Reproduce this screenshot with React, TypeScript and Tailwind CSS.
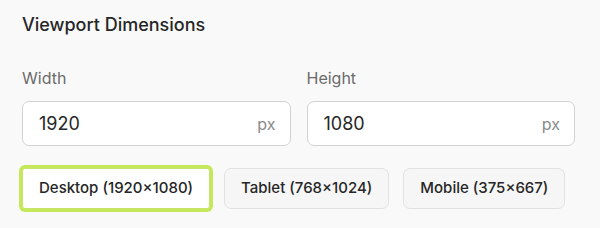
import React from "react";

export default function App() {
  const presets = [
    { label: "Desktop (1920×1080)", active: true },
    { label: "Tablet (768×1024)", active: false },
    { label: "Mobile (375×667)", active: false },
  ];
  return (
    <div
      className="w-[600px] h-[228px] bg-[#f9f9f9] pl-[22px] pr-[25px] pt-[11px]"
      style={{ fontFamily: "Inter, 'Noto Sans', sans-serif" }}
    >
      <h2 className="text-[18px] leading-[28px] font-medium text-[#262626]">Viewport Dimensions</h2>
      <div className="mt-[27px] grid grid-cols-2 gap-[16px]">
        {[
          { label: "Width", value: "1920" },
          { label: "Height", value: "1080" },
        ].map((f) => (
          <div key={f.label} className="flex flex-col">
            <span className="text-[16px] leading-[24px] text-[#6b6b6b]">{f.label}</span>
            <div className="mt-[11px] h-[45px] flex items-center justify-between rounded-[7px] border border-[#d2d2d2] bg-white pl-[16px] pr-[14px]">
              <span className="text-[18px] text-[#262626]">{f.value}</span>
              <span className="text-[16px] text-[#8a8a8a]">px</span>
            </div>
          </div>
        ))}
      </div>
      <div className="mt-[22px] flex gap-[14px]">
        {presets.map((p) => (
          <button
            key={p.label}
            className={
              p.active
                ? "h-[41px] px-[16px] rounded-[3px] border border-[#c8e46a] bg-white text-[15px] font-medium text-[#262626] ring-[3px] ring-[#c5e85a]"
                : "h-[41px] px-[16px] rounded-[7px] border border-[#e2e2e2] bg-[#f6f6f6] text-[15px] font-medium text-[#262626]"
            }
          >
            {p.label}
          </button>
        ))}
      </div>
    </div>
  );
}
